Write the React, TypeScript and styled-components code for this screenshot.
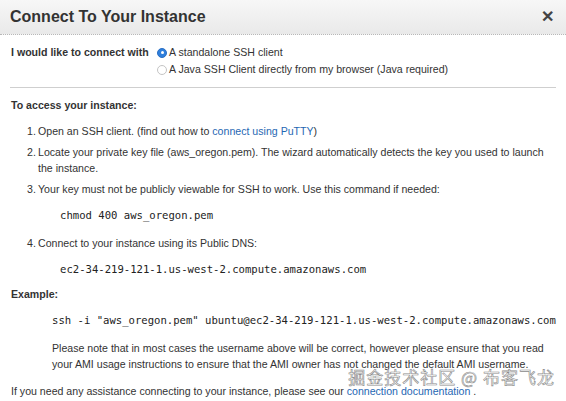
import React from 'react';
import styled, { createGlobalStyle } from 'styled-components';

const GlobalStyle = createGlobalStyle`
  html, body {
    margin: 0;
    padding: 0;
    background: #ffffff;
  }
  body {
    font-family: "Liberation Sans", Arial, sans-serif;
    color: #333333;
  }
`;

const Dialog = styled.div`
  position: relative;
  width: 566px;
  height: 401px;
  overflow: hidden;
  background: #ffffff;
`;

const Header = styled.div`
  display: flex;
  align-items: center;
  justify-content: space-between;
  height: 34px;
  padding: 0 12px 0 10px;
  background: linear-gradient(#f7f7f7, #e9e9e9);
  border-bottom: 1px dotted #b8b8b8;
`;

const Title = styled.h1`
  margin: 0;
  font-size: 16px;
  font-weight: bold;
  color: #333333;
`;

const Close = styled.span`
  font-size: 16px;
  font-weight: bold;
  color: #444444;
  line-height: 1;
`;

const Body = styled.div`
  padding: 0 10px 0 11px;
  font-size: 10.6px;
  line-height: 16px;
`;

const ChoiceRow = styled.div`
  display: flex;
  margin-top: 9px;
`;

const ChoiceLabel = styled.div`
  width: 146px;
  flex-shrink: 0;
  font-weight: bold;
  line-height: 17px;
`;

const RadioGroup = styled.div`
  display: flex;
  flex-direction: column;
  white-space: nowrap;
`;

const RadioOption = styled.label`
  display: flex;
  align-items: center;
  gap: 2px;
  line-height: 17px;
`;

const Radio = styled.span<{ $checked?: boolean }>`
  box-sizing: border-box;
  width: 10px;
  height: 10px;
  border-radius: 50%;
  display: inline-flex;
  align-items: center;
  justify-content: center;
  background: ${(p) => (p.$checked ? '#2f7fdc' : '#ffffff')};
  border: 1px solid ${(p) => (p.$checked ? '#2a6fc4' : '#c4c4c4')};

  &::after {
    content: '';
    width: 3px;
    height: 3px;
    border-radius: 50%;
    background: #ffffff;
    display: ${(p) => (p.$checked ? 'block' : 'none')};
  }
`;

const Divider = styled.hr`
  margin: 9px 0 0 -1px;
  border: 0;
  border-top: 1px solid #cfcfcf;
`;

const SectionTitle = styled.div<{ $top: number }>`
  font-weight: bold;
  margin-top: ${(p) => p.$top}px;
`;

const Steps = styled.ol`
  margin: 10px 0 0 0;
  padding-left: 16px;
  list-style: none;
  counter-reset: step;
`;

const Step = styled.li`
  counter-increment: step;
  position: relative;
  padding-left: 11px;
  margin-bottom: 5px;

  &::before {
    content: counter(step) '.';
    position: absolute;
    left: 0;
  }

  &:last-child {
    margin-bottom: 0;
  }
`;

const Code = styled.div<{ $indent: number; $bottom: number }>`
  font-family: "DejaVu Sans Mono", "Liberation Mono", monospace;
  font-size: 10.6px;
  margin: 10px 0 ${(p) => p.$bottom}px ${(p) => p.$indent}px;
  color: #222222;
  white-space: nowrap;
`;

const Note = styled.p`
  margin: 0 0 0 41px;
`;

const Footer = styled.p`
  margin: 11px 0 0 0;
  white-space: nowrap;
`;

const Link = styled.a`
  color: #1f67b3;
  text-decoration: none;
`;

const Watermark = styled.div`
  position: absolute;
  right: 11px;
  bottom: 12px;
  font-family: "Noto Sans CJK SC", sans-serif;
  font-size: 17px;
  letter-spacing: 1px;
  color: rgba(255, 255, 255, 0.85);
  -webkit-text-stroke: 0.6px #8a8a8a;
`;

export default function App() {
  return (
    <Dialog>
      <GlobalStyle />
      <Header>
        <Title>Connect To Your Instance</Title>
        <Close>✕</Close>
      </Header>
      <Body>
        <ChoiceRow>
          <ChoiceLabel>I would like to connect with</ChoiceLabel>
          <RadioGroup>
            <RadioOption>
              <Radio $checked />A standalone SSH client
            </RadioOption>
            <RadioOption>
              <Radio />A Java SSH Client directly from my browser (Java required)
            </RadioOption>
          </RadioGroup>
        </ChoiceRow>
        <Divider />
        <SectionTitle $top={9}>To access your instance:</SectionTitle>
        <Steps>
          <Step>
            Open an SSH client. (find out how to <Link>connect using PuTTY</Link>)
          </Step>
          <Step>
            Locate your private key file (aws_oregon.pem). The wizard automatically detects the key you used to launch
            the instance.
          </Step>
          <Step>
            Your key must not be publicly viewable for SSH to work. Use this command if needed:
            <Code $indent={22} $bottom={12}>chmod 400 aws_oregon.pem</Code>
          </Step>
          <Step>
            Connect to your instance using its Public DNS:
            <Code $indent={22} $bottom={9}>ec2-34-219-121-1.us-west-2.compute.amazonaws.com</Code>
          </Step>
        </Steps>
        <SectionTitle $top={0}>Example:</SectionTitle>
        <Code $indent={41} $bottom={12}>
          ssh -i "aws_oregon.pem" ubuntu@ec2-34-219-121-1.us-west-2.compute.amazonaws.com
        </Code>
        <Note>
          Please note that in most cases the username above will be correct, however please ensure that you read
          your AMI usage instructions to ensure that the AMI owner has not changed the default AMI username.
        </Note>
        <Footer>
          If you need any assistance connecting to your instance, please see our{' '}
          <Link>connection documentation</Link> .
        </Footer>
      </Body>
      <Watermark>掘金技术社区 @ 布客飞龙</Watermark>
    </Dialog>
  );
}
